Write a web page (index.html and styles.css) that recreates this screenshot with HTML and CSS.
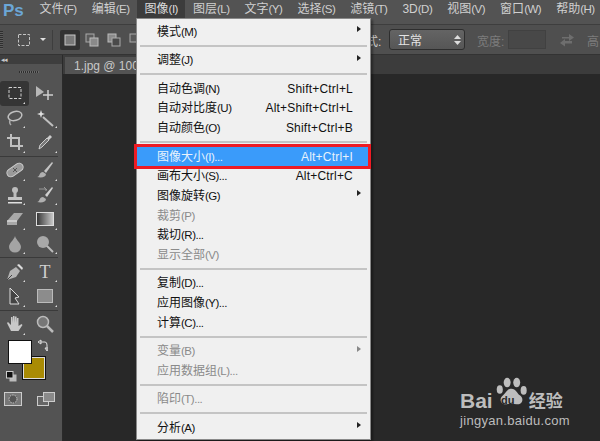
FILE: index.html
```html
<!DOCTYPE html>
<html lang="zh">
<head>
<meta charset="utf-8">
<title>Photoshop</title>
<link rel="stylesheet" href="styles.css">
</head>
<body>
<div class="app">
  <header class="menubar">
    <span class="ps">Ps</span>
    <nav class="menus">
      <span class="m">文件<b>(F)</b></span>
      <span class="m">编辑<b>(E)</b></span>
      <span class="m active">图像<b>(I)</b></span>
      <span class="m">图层<b>(L)</b></span>
      <span class="m">文字<b>(Y)</b></span>
      <span class="m">选择<b>(S)</b></span>
      <span class="m">滤镜<b>(T)</b></span>
      <span class="m">3D<b>(D)</b></span>
      <span class="m">视图<b>(V)</b></span>
      <span class="m">窗口<b>(W)</b></span>
      <span class="m">帮助<b>(H)</b></span>
    </nav>
  </header>

  <div class="options">
    <span class="grip"></span>
    <svg class="opt-marquee" width="14" height="14" viewBox="0 0 14 14"><rect x="1.500" y="1.500" width="11" height="11" fill="none" stroke="#c4c4c4" stroke-width="1" stroke-dasharray="3 1.500"/></svg>
    <span class="caret"></span>
    <span class="vsep"></span>
    <span class="mode on"><svg width="12" height="12" viewBox="0 0 12 12"><rect x="1" y="1" width="10" height="10" fill="#7a7a7a" stroke="#c8c8c8"/></svg></span>
    <span class="mode"><svg width="14" height="14" viewBox="0 0 14 14"><rect x="1" y="1" width="8" height="8" fill="#5a5a5a" stroke="#aaa"/><rect x="5" y="5" width="8" height="8" fill="#8a8a8a" stroke="#bbb"/></svg></span>
    <span class="mode"><svg width="14" height="14" viewBox="0 0 14 14"><rect x="1" y="1" width="8" height="8" fill="#8a8a8a" stroke="#bbb"/><rect x="5" y="5" width="8" height="8" fill="#4a4a4a" stroke="#aaa"/></svg></span>
    <span class="mode"><svg width="14" height="14" viewBox="0 0 14 14"><rect x="1" y="1" width="8" height="8" fill="#5a5a5a" stroke="#aaa"/></svg></span>
    <span class="style-label">样式:</span>
    <span class="select"><span>正常</span><svg width="7" height="10" viewBox="0 0 7 10"><path d="M3.500 0L7 4H0zM3.500 10L0 6h7z" fill="#ddd"/></svg></span>
    <span class="dim-label">宽度:</span>
    <span class="field"></span>
    <svg class="swap" width="16" height="14" viewBox="0 0 16 14"><path d="M3 4h7V1l5 3.500L10 8V5.500H3zM13 8H6V6l-5 4 5 3.500V10.500h7z" fill="#6e6e6e"/></svg>
    <span class="dim-label tail">高</span>
  </div>

  <div class="workspace">
    <aside class="tools">
      <div class="tools-head"><span class="collapse">◂◂</span></div>
      <div class="tools-grip"></div>
      <div class="tool-grid">
        <span class="tool sel c"><svg width="16" height="16" viewBox="0 0 16 16"><rect x="2" y="2.500" width="12" height="11" fill="none" stroke="#d2d2d2" stroke-dasharray="3 1.500"/></svg></span>
        <span class="tool"><svg width="20" height="18" viewBox="0 0 20 18"><path d="M1 2l8 6-8 5z" fill="#b8b8b8"/><path d="M13 6v10M8 11h10" stroke="#d0d0d0" stroke-width="1.500"/></svg></span>
        <span class="tool c"><svg width="18" height="18" viewBox="0 0 18 18"><ellipse cx="9" cy="7" rx="7" ry="4.500" transform="rotate(-15 9 7)" fill="none" stroke="#c0c0c0" stroke-width="1.500"/><path d="M4 11q-1 3 1 5" fill="none" stroke="#aaa" stroke-width="1.500"/></svg></span>
        <span class="tool c"><svg width="20" height="18" viewBox="0 0 20 18"><path d="M8 8l10 9" stroke="#c0c0c0" stroke-width="2"/><path d="M6 1l1 3 3 1-3 1-1 3-1-3-3-1 3-1z" fill="#e0e0e0"/></svg></span>
        <span class="tool c"><svg width="16" height="16" viewBox="0 0 16 16"><path d="M4 0v12h12M0 4h12v12" fill="none" stroke="#c0c0c0" stroke-width="2"/></svg></span>
        <span class="tool c"><svg width="16" height="18" viewBox="0 0 16 18"><path d="M2 16l1-4 7-7 2 2-7 7z" fill="#777" stroke="#ccc"/><path d="M10 5l3-3 2 2-3 3z" fill="#ccc"/></svg></span>
        <div class="rule"></div>
        <span class="tool c"><svg width="20" height="18" viewBox="0 0 20 18"><rect x="1" y="5" width="18" height="8" rx="4" transform="rotate(-35 10 9)" fill="#9a9a9a" stroke="#ccc"/><path d="M8 7l4 4M12 7l-4 4" stroke="#555"/></svg></span>
        <span class="tool c"><svg width="18" height="18" viewBox="0 0 18 18"><path d="M8 10L16 1l1 1-7 10z" fill="#c4c4c4"/><path d="M1 16c3 0 2-5 6-5l3 2c0 3-4 4-9 3z" fill="#b0b0b0"/></svg></span>
        <span class="tool c"><svg width="16" height="18" viewBox="0 0 16 18"><circle cx="8" cy="4" r="3" fill="#bdbdbd"/><path d="M6.500 6h3v5h-3z" fill="#bdbdbd"/><path d="M1 11h14v3H1z" fill="#c4c4c4"/><path d="M1 16h14v1.500H1z" fill="#e0e0e0"/></svg></span>
        <span class="tool c"><svg width="18" height="18" viewBox="0 0 18 18"><path d="M9 9L16 1l1 1-6 9z" fill="#d0d0d0"/><path d="M1 16c3 0 2-5 6-5l3 2c0 3-4 4-9 3z" fill="#b0b0b0"/><path d="M3 3h7v2M8 1l3 3" fill="none" stroke="#999"/></svg></span>
        <span class="tool c"><svg width="18" height="14" viewBox="0 0 18 14"><path d="M1 9l7-8h9l-6 8v4H1z" fill="#a8a8a8"/><path d="M1 9h10" stroke="#eee"/></svg></span>
        <span class="tool c"><svg width="18" height="14" viewBox="0 0 18 14"><defs><linearGradient id="g"><stop offset="0" stop-color="#333"/><stop offset="1" stop-color="#ccc"/></linearGradient></defs><rect x=".5" y=".5" width="17" height="13" fill="url(#g)" stroke="#ddd"/></svg></span>
        <span class="tool c"><svg width="14" height="18" viewBox="0 0 14 18"><path d="M7 1c1 4 6 7 6 11a6 5.500 0 0 1-12 0c0-4 5-7 6-11z" fill="#a4a4a4"/></svg></span>
        <span class="tool c"><svg width="18" height="18" viewBox="0 0 18 18"><circle cx="7" cy="7" r="6" fill="#a8a8a8"/><path d="M11 11l6 6" stroke="#bbb" stroke-width="2"/></svg></span>
        <div class="rule"></div>
        <span class="tool c"><svg width="18" height="18" viewBox="0 0 18 18"><path d="M1 17l3-9 6-4 4 4-4 6z" fill="#b4b4b4"/><path d="M11 2l2-1 4 4-1 2z" fill="#ddd"/><path d="M1 17l5-5" stroke="#444"/></svg></span>
        <span class="tool c"><span class="t-glyph">T</span></span>
        <span class="tool c"><svg width="14" height="18" viewBox="0 0 14 18"><path d="M2 1l9 9-4 1 4 6H2z" fill="#444" stroke="#ddd"/></svg></span>
        <span class="tool c"><svg width="16" height="14" viewBox="0 0 16 14"><rect x=".5" y=".5" width="15" height="13" fill="#8c8c8c" stroke="#bbb"/></svg></span>
        <div class="rule"></div>
        <span class="tool c"><svg width="18" height="18" viewBox="0 0 18 18"><path d="M5 16L1 8l1-1 3 3V2h1.500l.5 6V1h1.500l.5 7V1.500h1.500L11 8V3h1.500v8l3-2 1 1-4 6z" fill="#c8c8c8"/></svg></span>
        <span class="tool"><svg width="18" height="18" viewBox="0 0 18 18"><circle cx="7" cy="7" r="5.500" fill="#777" stroke="#bbb" stroke-width="1.500"/><path d="M11 11l6 6" stroke="#bbb" stroke-width="2.500"/></svg></span>
      </div>
      <div class="colors">
        <span class="swatch bg"></span>
        <span class="swatch fg"></span>
        <svg class="swap-colors" width="10" height="12" viewBox="0 0 10 12"><path d="M2 3h5q2 0 2 3v5M0 3l3-2v4zM9 12L7 9h4z" fill="none" stroke="#ddd"/></svg>
        <svg class="default-colors" width="11" height="11" viewBox="0 0 11 11"><rect x="3.500" y="3.500" width="7" height="7" fill="#bbb"/><rect x=".5" y=".5" width="6.500" height="6.500" fill="#111" stroke="#ccc"/></svg>
      </div>
      <div class="tool-foot">
        <svg width="18" height="14" viewBox="0 0 18 14"><rect x=".5" y=".5" width="17" height="13" fill="#777" stroke="#ccc"/><circle cx="9" cy="7" r="4" fill="#555" stroke="#ccc" stroke-dasharray="1.500 1"/></svg>
        <svg class="screen" width="18" height="14" viewBox="0 0 18 14"><rect x=".5" y="4.500" width="11" height="9" fill="#666" stroke="#ccc"/><rect x="6.500" y=".5" width="11" height="9" fill="#8a8a8a" stroke="#ccc"/></svg>
      </div>
    </aside>

    <main class="doc-area">
      <div class="tabs"><span class="tab">1.jpg @ 100%</span></div>
      <div class="canvas">
        <div class="logo">
          <div class="logo-top">
            <span class="bai">Bai</span>
            <svg class="paw" width="33" height="34" viewBox="0 0 38 36"><ellipse cx="5.500" cy="14" rx="3.500" ry="5" fill="#bdbdbd"/><ellipse cx="14" cy="6" rx="4" ry="5.500" fill="#bdbdbd"/><ellipse cx="25" cy="6" rx="4" ry="5.500" fill="#bdbdbd"/><ellipse cx="33" cy="15" rx="3.500" ry="5" fill="#bdbdbd"/><path d="M19 13c5 0 6 5 10 8 5 4 2 11-4 10-4-1-8-1-12 0-6 1-9-6-4-10 4-3 5-8 10-8z" fill="#bdbdbd"/></svg>
            <span class="du">du</span>
            <span class="jy">经验</span>
          </div>
          <div class="logo-url">jingyan.baidu.com</div>
        </div>
      </div>
    </main>
  </div>

  <div class="menu">
    <div class="it"><span>模式<b>(M)</b></span><i class="arr"></i></div>
    <hr>
    <div class="it"><span>调整<b>(J)</b></span><i class="arr"></i></div>
    <hr>
    <div class="it"><span>自动色调<b>(N)</b></span><kbd>Shift+Ctrl+L</kbd></div>
    <div class="it"><span>自动对比度<b>(U)</b></span><kbd>Alt+Shift+Ctrl+L</kbd></div>
    <div class="it"><span>自动颜色<b>(O)</b></span><kbd>Shift+Ctrl+B</kbd></div>
    <hr>
    <div class="it hi"><span>图像大小<b>(I)...</b></span><kbd>Alt+Ctrl+I</kbd></div>
    <div class="it"><span>画布大小<b>(S)...</b></span><kbd>Alt+Ctrl+C</kbd></div>
    <div class="it"><span>图像旋转<b>(G)</b></span><i class="arr"></i></div>
    <div class="it off"><span>裁剪<b>(P)</b></span></div>
    <div class="it"><span>裁切<b>(R)...</b></span></div>
    <div class="it off"><span>显示全部<b>(V)</b></span></div>
    <hr>
    <div class="it"><span>复制<b>(D)...</b></span></div>
    <div class="it"><span>应用图像<b>(Y)...</b></span></div>
    <div class="it"><span>计算<b>(C)...</b></span></div>
    <hr>
    <div class="it off"><span>变量<b>(B)</b></span><i class="arr"></i></div>
    <div class="it off"><span>应用数据组<b>(L)...</b></span></div>
    <hr>
    <div class="it off"><span>陷印<b>(T)...</b></span></div>
    <hr>
    <div class="it"><span>分析<b>(A)</b></span><i class="arr"></i></div>
  </div>
</div>
</body>
</html>
```
FILE: styles.css
```css
* { box-sizing: border-box; }
html, body { margin: 0; height: 100%; }
body {
  width: 600px;
  height: 441px;
  overflow: hidden;
  font-family: "Liberation Sans", "Noto Sans CJK SC", sans-serif;
  font-size: 12px;
  background: #282828;
}
.app {
  position: relative;
  width: 600px;
  height: 441px;
  display: flex;
  flex-direction: column;
  overflow: hidden;
}
b { font-weight: normal; font-size: 11.500px; letter-spacing: -.5px; }

/* Menu bar */
.menubar {
  height: 24px;
  flex: none;
  display: flex;
  align-items: stretch;
  background: #535353;
  color: #d0d0d0;
}
.ps {
  width: 32px;
  flex: none;
  padding-left: 3px;
  font: bold 17px/21px "Liberation Sans", sans-serif;
  color: #6ba6d6;
}
.menus { display: flex; }
.m {
  flex: none;
  height: 18px;
  padding: 1px 7.500px 0;
  line-height: 17px;
  white-space: nowrap;
}
.m.active { background: #3c3c3c; color: #dcdcdc; }

/* Options bar */
.options {
  height: 31px;
  flex: none;
  display: flex;
  align-items: center;
  background: #4f4f4f;
  border-top: 1px solid #3e3e3e;
  border-bottom: 1px solid #333;
  color: #d0d0d0;
  position: relative;
}
.grip {
  width: 3px;
  height: 18px;
  background: repeating-linear-gradient(#2e2e2e 0 1px, #5c5c5c 1px 2px);
}
.opt-marquee { margin-left: 14px; }
.caret {
  width: 0;
  height: 0;
  margin-left: 9px;
  border: 3px solid transparent;
  border-top: 3px solid #e0e0e0;
  border-bottom: 0;
}
.vsep { width: 1px; height: 20px; margin-left: 6px; background: #3e3e3e; }
.mode {
  width: 20px;
  height: 20px;
  margin-left: 2px;
  display: flex;
  align-items: center;
  justify-content: center;
}
.mode.on {
  margin-left: 7px;
  background: #333;
  border-radius: 2px;
}
.style-label { position: absolute; left: 354px; top: 7px; }
.select {
  position: absolute;
  left: 389px;
  top: 4px;
  width: 76px;
  height: 21px;
  display: flex;
  align-items: center;
  justify-content: space-between;
  padding: 0 3px 0 8px;
  background: linear-gradient(#646464, #565656);
  border: 1px solid #2e2e2e;
  border-radius: 3px;
  color: #e4e4e4;
}
.dim-label { position: absolute; left: 477px; top: 7px; color: #7c7c7c; white-space: nowrap; }
.dim-label.tail { left: 587px; }
.field {
  position: absolute;
  left: 508px;
  top: 5px;
  width: 38px;
  height: 19px;
  background: #484848;
  border: 1px solid #414141;
}
.swap { position: absolute; left: 559px; top: 8px; }

/* Workspace */
.workspace { flex: 1; display: flex; min-height: 0; background: #3c3c3c; }
.tools {
  width: 63px;
  flex: none;
  background: #535353;
  border-right: 1px solid #2a2a2a;
  display: flex;
  flex-direction: column;
}
.tools-head {
  height: 9px;
  flex: none;
  background: #3e3e3e;
  color: #c8c8c8;
  font-size: 7px;
  line-height: 9px;
  padding-left: 1px;
  letter-spacing: -1px;
}
.tools-grip {
  width: 20px;
  height: 2px;
  flex: none;
  margin: 7px auto 0 19px;
  background: repeating-linear-gradient(90deg, #2e2e2e 0 1px, #6a6a6a 1px 2px);
}
.tool-grid {
  display: grid;
  grid-template-columns: 29px 32px;
  margin-top: 8px;
}
.tool {
  position: relative;
  height: 24.500px;
  display: flex;
  align-items: center;
  justify-content: center;
}
.tool.c::after {
  content: "";
  position: absolute;
  right: 4px;
  bottom: 2px;
  border: 1.500px solid transparent;
  border-right-color: #ddd;
  border-bottom-color: #ddd;
}
.tool.sel { background: #353535; border-radius: 3px; }
.rule {
  grid-column: 1 / -1;
  height: 1px;
  background: #3a3a3a;
  margin: 1px 3px 1.500px 0;
}
.t-glyph {
  font: 18px/18px "Liberation Serif", serif;
  color: #cfcfcf;
}
.colors { position: relative; height: 47px; flex: none; }
.swatch { position: absolute; display: block; }
.swatch.bg {
  left: 22px;
  top: 19px;
  width: 24px;
  height: 24px;
  background: #a98b04;
  border: 1px solid #111;
  box-shadow: inset 0 0 0 1px #ddd;
}
.swatch.fg {
  left: 8px;
  top: 3px;
  width: 24px;
  height: 24px;
  background: #fff;
  border: 1px solid #111;
}
.swap-colors { position: absolute; left: 38px; top: 2px; }
.default-colors { position: absolute; left: 6px; top: 34px; }
.tool-foot {
  display: flex;
  align-items: center;
  gap: 15px;
  padding-left: 4px;
  margin-top: 8px;
}

/* Document */
.doc-area { flex: 1; display: flex; flex-direction: column; min-width: 0; }
.tabs { height: 19px; flex: none; background: #3c3c3c; display: flex; padding: 2px 0 0 2px; }
.tab {
  width: 120px;
  padding: 1px 0 0 9px;
  background: #535353;
  color: #c8c8c8;
  line-height: 16px;
  white-space: nowrap;
}
.canvas { flex: 1; background: #282828; position: relative; }

/* Watermark */
.logo {
  position: absolute;
  right: 33px;
  bottom: 13px;
  width: 107px;
  color: #bdbdbd;
}
.logo-top { display: flex; align-items: flex-end; position: relative; height: 34px; }
.bai {
  font: bold 21px/24px "Liberation Sans", sans-serif;
  margin: 0 2px -2px 0;
}
.paw { flex: none; margin-bottom: 1px; }
.du {
  position: absolute;
  left: 41px;
  top: 17px;
  font: bold 11px/12px "Liberation Sans", sans-serif;
  color: #282828;
}
.jy {
  font: bold 17px/18px "Noto Sans CJK SC", sans-serif;
  white-space: nowrap;
  margin: 0 0 2px 1px;
}
.logo-url { font-size: 13px; line-height: 14px; white-space: nowrap; letter-spacing: .3px; margin-top: 3px; }

/* Dropdown */
.menu {
  position: absolute;
  left: 136px;
  top: 18px;
  width: 235px;
  height: 422px;
  padding: 3px 3px 0;
  background: #f0f0f0;
  border: 1px solid #8a8a8a;
  box-shadow: 2px 2px 2px rgba(0,0,0,.35);
  color: #111;
}
.it {
  height: 19.700px;
  display: flex;
  align-items: center;
  justify-content: space-between;
  padding: 0 14px 0 17px;
  white-space: nowrap;
  line-height: 16px;
}
.it kbd { font: inherit; letter-spacing: .2px; }
.it.off { color: #8a8a8a; }
.it.hi {
  background: #3a9bfa;
  color: #e8f2fc;
  outline: 3px solid #ee1b24;
  position: relative;
  margin: 0 -1px 0 -3px;
  padding: 0 15px 0 20px;
}
.arr {
  width: 0;
  height: 0;
  margin: -5px -8px 0 0;
  border: 3.500px solid transparent;
  border-left: 4px solid #222;
  border-right: 0;
}
.off .arr { border-left-color: #888; }
hr {
  height: 2px;
  margin: 3px 0 3.750px;
  border: 0;
  background: #c4c4c4;
}
```
